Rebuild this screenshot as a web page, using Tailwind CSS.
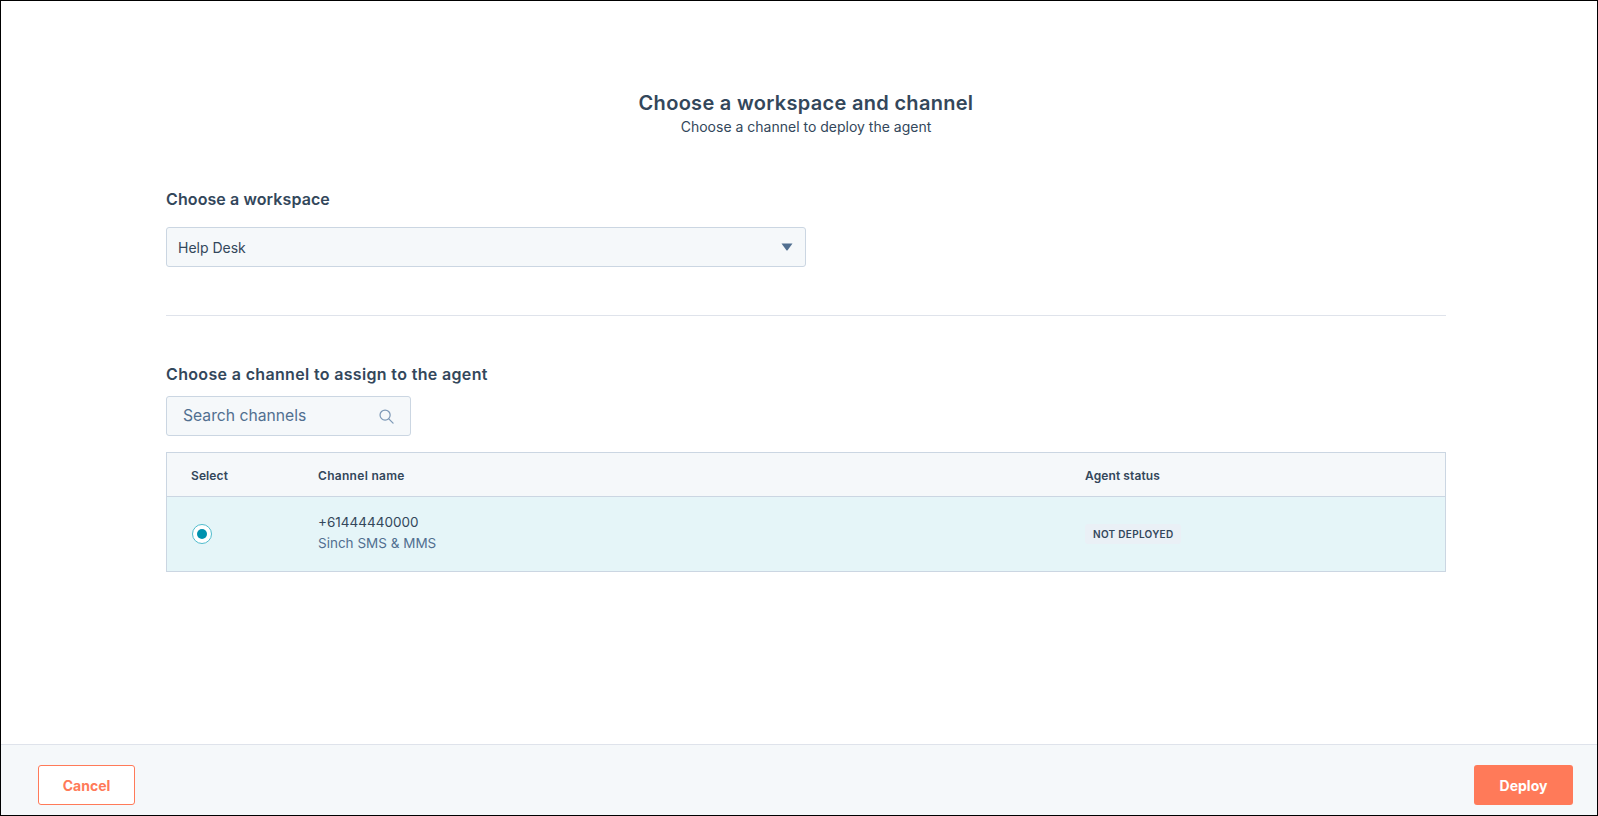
<!DOCTYPE html>
<html lang="en">
<head>
  <meta charset="UTF-8">
  <title>Choose a workspace and channel</title>
  <script src="https://cdn.jsdelivr.net/npm/@tailwindcss/browser@4"></script>
</head>
<body class="bg-white text-[#33475b] font-['Inter',sans-serif]">
  <div class="h-[816px] border border-black flex flex-col">
    <!-- Main content -->
    <main class="flex-1 pl-[165px] pr-[151px] pt-[89px]">
      <div class="text-center">
        <h1 class="text-[20px] leading-[26px] font-semibold tracking-[0.3px]">Choose a workspace and channel</h1>
        <p class="mt-[1px] text-[14px] leading-[20px]">Choose a channel to deploy the agent</p>
      </div>

      <h2 class="mt-[51px] text-[16px] leading-[22px] font-semibold tracking-[0.1px]">Choose a workspace</h2>
      <div class="mt-[17px] w-[640px] h-[40px] flex items-center justify-between pl-[11px] pr-[12px] bg-[#f5f8fa] border border-[#cbd6e2] rounded-[3px]">
        <span class="text-[14px]">Help Desk</span>
        <svg class="w-[12px] h-[8px]" viewBox="0 0 12 8"><path d="M0.5 0.5h11L6.6 7.2a.8.8 0 0 1-1.2 0z" fill="#516f90"/></svg>
      </div>

      <hr class="mt-[48px] border-0 border-t border-[#dfe3eb]">

      <h2 class="mt-[47px] text-[16px] leading-[22px] font-semibold tracking-[0.34px]">Choose a channel to assign to the agent</h2>
      <div class="mt-[11px] w-[245px] h-[40px] flex items-center justify-between pl-[16px] pr-[16px] bg-[#f5f8fa] border border-[#cbd6e2] rounded-[3px]">
        <span class="text-[15.7px] text-[#516f90]">Search channels</span>
        <svg class="w-[15px] h-[15px]" viewBox="0 0 16 16" fill="none" stroke="#7c98b6" stroke-width="1.3"><circle cx="6.5" cy="6.5" r="5.4"/><path d="M10.5 10.5l4.5 4.5" stroke-linecap="round"/></svg>
      </div>

      <!-- Channels table -->
      <div class="mt-[16px] border border-[#cbd6e2]">
        <div class="grid grid-cols-[151px_767px_1fr] items-center h-[44px] pt-[2px] bg-[#f5f8fa] border-b border-[#cbd6e2] text-[12px] font-semibold tracking-[0.1px]">
          <span class="pl-[24px]">Select</span>
          <span class="tracking-[0.3px]">Channel name</span>
          <span>Agent status</span>
        </div>
        <div class="grid grid-cols-[151px_767px_1fr] items-center h-[74px] bg-[#e5f5f8]">
          <div class="pl-[25px]">
            <span class="flex items-center justify-center w-[20px] h-[20px] rounded-full bg-white border-[1.5px] border-[#4fbccd]">
              <span class="w-[10px] h-[10px] rounded-full bg-[#0091ae]"></span>
            </span>
          </div>
          <div class="text-[13.5px] leading-[21px] pb-[2px]">
            <div>+61444440000</div>
            <div class="text-[#516f90]">Sinch SMS &amp; MMS</div>
          </div>
          <div class="flex">
            <span class="flex items-center px-[8px] h-[20px] rounded-[3px] bg-[#eaf0f6] text-[10px] font-semibold tracking-[0.3px]">NOT DEPLOYED</span>
          </div>
        </div>
      </div>
    </main>

    <!-- Footer -->
    <footer class="h-[71px] flex items-end justify-between pl-[37px] pr-[24px] pb-[10px] bg-[#f5f8fa] border-t border-[#dfe3eb]">
      <button class="w-[97px] h-[40px] bg-white border border-[#ff7a59] rounded-[3px] text-[#ff7a59] text-[14px] font-bold">Cancel</button>
      <button class="w-[99px] h-[40px] bg-[#ff7a59] rounded-[3px] text-white text-[14px] font-bold">Deploy</button>
    </footer>
  </div>
</body>
</html>
